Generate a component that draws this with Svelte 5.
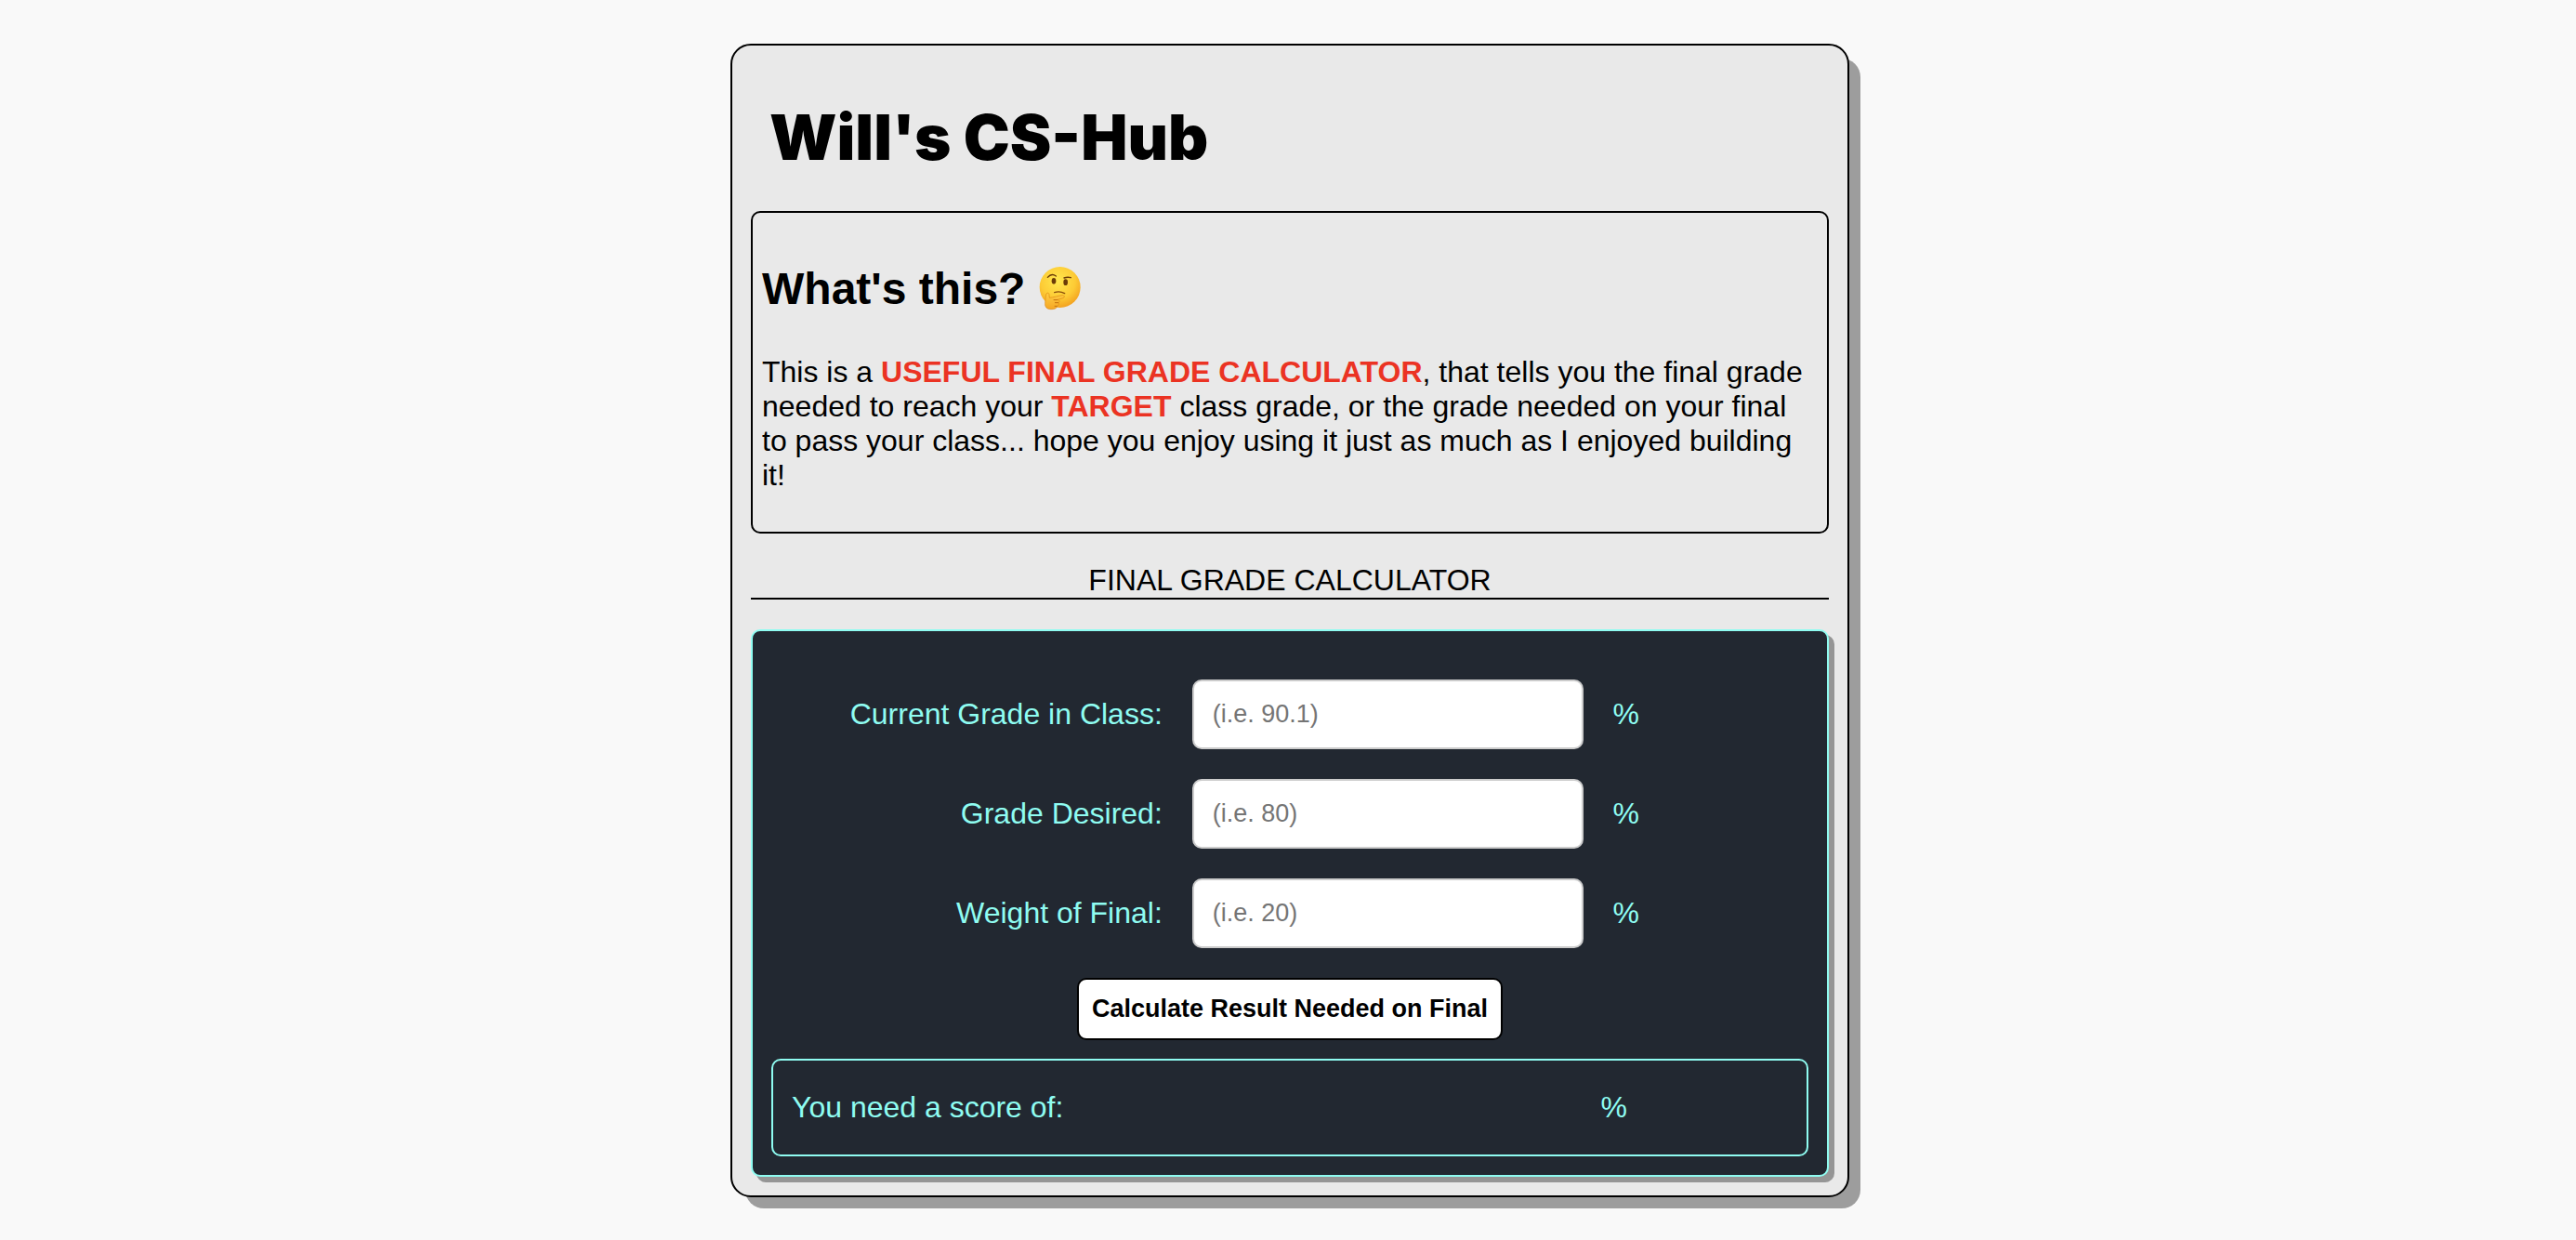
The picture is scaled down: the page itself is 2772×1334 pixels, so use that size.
<script>
  const fields = [
    { id: 'current', label: 'Current Grade in Class:', hint: '(i.e. 90.1)' },
    { id: 'desired', label: 'Grade Desired:', hint: '(i.e. 80)' },
    { id: 'weight', label: 'Weight of Final:', hint: '(i.e. 20)' }
  ];

  let values = $state({ current: '', desired: '', weight: '' });
  let result = $state('');

  function calculate(event) {
    event.preventDefault();
    const share = Number(values.weight) / 100;
    if (!share) return;
    const score = (Number(values.desired) - Number(values.current) * (1 - share)) / share;
    result = score.toFixed(2);
  }
</script>

<main>
  <div class="card">
    <h1>Will's CS-Hub</h1>

    <section class="intro">
      <h2>
        What's this?
        <svg class="emoji" viewBox="52 42 144 150" role="img" aria-label="Thinking face">
          <defs>
            <radialGradient id="skin" cx="0.45" cy="0.35" r="0.7">
              <stop offset="0" stop-color="#ffe84f" />
              <stop offset="0.6" stop-color="#fdcb35" />
              <stop offset="1" stop-color="#f19a1c" />
            </radialGradient>
            <linearGradient id="palm" x1="0" y1="0" x2="0" y2="1">
              <stop offset="0" stop-color="#ffcf45" />
              <stop offset="1" stop-color="#f5a623" />
            </linearGradient>
          </defs>
          <circle cx="123" cy="114" r="66" fill="url(#skin)" />
          <path d="M83 82q13-15 27-4" fill="none" stroke="#6b3c08" stroke-width="4" stroke-linecap="round" />
          <path d="M136 84q11-4 22-1" fill="none" stroke="#6b3c08" stroke-width="4" stroke-linecap="round" />
          <ellipse cx="103" cy="94" rx="7" ry="10" fill="#6b3c08" />
          <ellipse cx="141" cy="98" rx="7" ry="10" fill="#6b3c08" />
          <path d="M105 131q17-6 33 3" fill="none" stroke="#8a4f0c" stroke-width="4" stroke-linecap="round" />
          <path
            d="M79 135c4-5 9-2 9 4l1 9c14-1 28-7 42-8 7 0 8 7 2 9l-17 5c7 3 6 7 2 10 3 5 0 9-4 11-2 8-10 10-20 10-13 0-20-7-19-19 1-11 1-23 4-31z"
            fill="url(#palm)"
            stroke="#dc8710"
            stroke-width="2"
          />
          <path d="M116 155h-14M118 164h-12M114 175h-9" fill="none" stroke="#c26f0c" stroke-width="3" />
        </svg>
      </h2>
      <p>
        This is a <strong>USEFUL FINAL GRADE CALCULATOR</strong>, that tells you the final grade
        needed to reach your <strong>TARGET</strong> class grade, or the grade needed on your final
        to pass your class... hope you enjoy using it just as much as I enjoyed building it!
      </p>
    </section>

    <p class="caption">FINAL GRADE CALCULATOR</p>

    <form class="panel" onsubmit={calculate}>
      {#each fields as field (field.id)}
        <div class="row">
          <label for={field.id}>{field.label}</label>
          <input id={field.id} type="text" placeholder={field.hint} bind:value={values[field.id]} />
          <span>%</span>
        </div>
      {/each}
      <button type="submit">Calculate Result Needed on Final</button>
      <div class="row result">
        <span>You need a score of:</span>
        <output for="current desired weight">{result}</output>
        <span>%</span>
      </div>
    </form>
  </div>
</main>

<style>
  :global(body) {
    background: #f9f9f9;
  }

  main {
    padding: 47px 16px 46px 20px;
    font-family: 'Liberation Sans', Arial, sans-serif;
    font-size: 32px;
    line-height: 37px;
    color: #000;
  }

  .card {
    box-sizing: border-box;
    max-width: 1204px;
    margin: 0 auto;
    padding: 20px;
    border: 2px solid #000;
    border-radius: 22px;
    background: #e9e9e9;
    box-shadow: 14px 14px 0 -2px #9d9d9d;
  }

  h1 {
    margin: 0;
    padding: 40px 20px;
    font-family: Inter, 'Liberation Sans', sans-serif;
    font-size: 67px;
    font-weight: 900;
    line-height: 78px;
  }

  .intro {
    padding: 0 10px 10px;
    border: 2px solid #000;
    border-radius: 10px;
  }

  h2 {
    margin: 50px 0 40px;
    font-size: 48px;
    line-height: 63px;
  }

  .emoji {
    width: 48px;
    height: 50px;
    vertical-align: -8px;
  }

  p {
    margin: 32px 0;
  }

  strong {
    color: #eb3323;
  }

  .caption {
    border-bottom: 2px solid #000;
    text-align: center;
  }

  .panel {
    display: flex;
    flex-direction: column;
    gap: 32px;
    padding: 52px 20px 20px;
    border: 2px solid #8ffcf1;
    border-radius: 10px;
    background: #222831;
    box-shadow: 6px 6px 0 #959595;
    color: #8ffcf1;
  }

  .row {
    display: grid;
    grid-template-columns: 2fr 2fr 1fr;
    gap: 32px;
    align-items: center;
  }

  label {
    text-align: right;
  }

  input {
    box-sizing: border-box;
    width: 100%;
    height: 75px;
    padding: 0 20px;
    border: 2px solid #ccc;
    border-radius: 10px;
    background: #fff;
    font-family: inherit;
    font-size: 27px;
    color: #000;
  }

  input::placeholder {
    color: #757575;
  }

  button {
    align-self: center;
    height: 67px;
    padding: 0 14px;
    border: 2px solid #000;
    border-radius: 10px;
    background: #fff;
    font-family: inherit;
    font-size: 27px;
    font-weight: bold;
    color: #000;
  }

  .result {
    margin-top: -12px;
    padding: 32px 20px;
    border: 2px solid #8ffcf1;
    border-radius: 10px;
  }
</style>
